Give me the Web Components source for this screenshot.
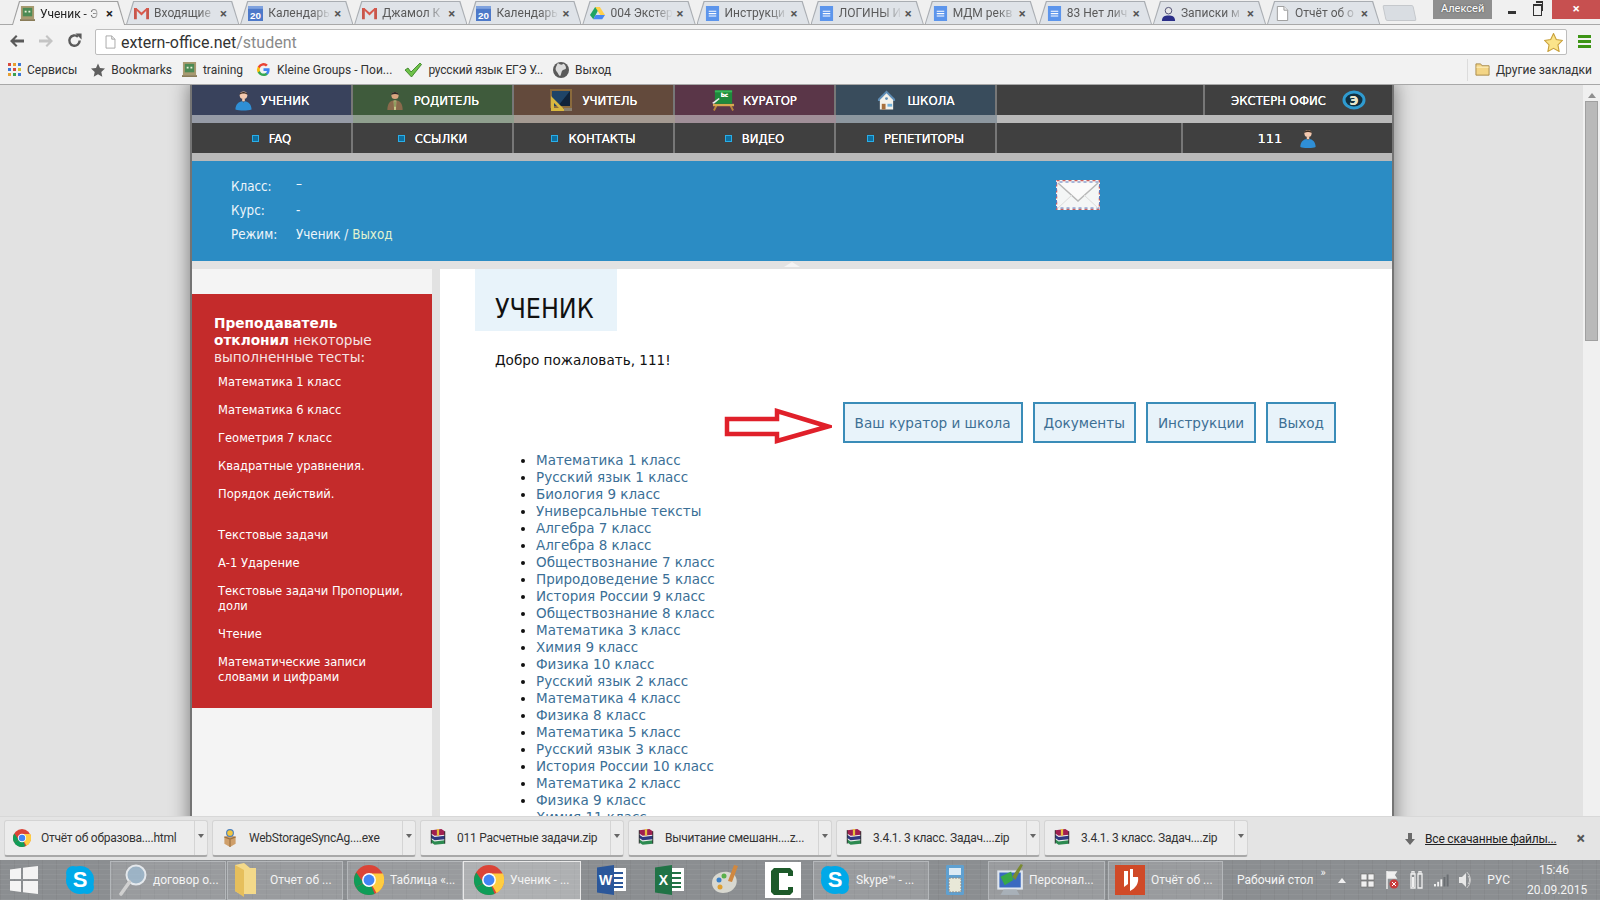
<!DOCTYPE html>
<html lang="ru">
<head>
<meta charset="utf-8">
<title>Ученик</title>
<style>
  html, body { margin: 0; height: 900px; overflow: hidden; background: #e2e2e2; }
  body { display: flex; flex-direction: column; font-family: Roboto, "Noto Sans", sans-serif; }
</style>
</head>
<body>
<browser-tabs></browser-tabs>
<browser-toolbar></browser-toolbar>
<bookmark-bar></bookmark-bar>
<page-area>
  <site-nav></site-nav>
  <student-info></student-info>
  <div slot="left"><rejected-tests></rejected-tests></div>
  <student-main></student-main>
</page-area>
<download-shelf></download-shelf>
<win-taskbar></win-taskbar>

<script>
const svg = (w, h, vb, body) => `<svg xmlns="http://www.w3.org/2000/svg" width="${w}" height="${h}" viewBox="${vb}" style="display:block;flex:none">${body}</svg>`;

// every icon is drawn on its own grid, callers only give the pixel size
const ICONS = {
  student: `<circle cx="10" cy="6" r="4" fill="#f3c9b0"/><path d="M5.8 5.5C6 1.5 14 1.5 14.2 5.5 12 3.8 8 3.8 5.8 5.5z" fill="#3a2a20"/><path d="M8.6 9.5h2.8v3H8.6z" fill="#f3c9b0"/><path d="M1.5 21c0-6 4-8.5 7-8.8l1.5 1.3 1.5-1.3c3 .3 7 2.8 7 8.8-4 1.5-13 1.5-17 0z" fill="#2f8fd6"/>`,
  parent: `<circle cx="10" cy="6" r="4" fill="#d9a57f"/><path d="M5.8 5.5C6 .8 14 .8 14.2 5.5 12 3.8 8 3.8 5.8 5.5z" fill="#2b2b2b"/><path d="M1.5 22c0-7 3-10 6.500-10.500h4c3.500.5 6.500 3.500 6.500 10.500z" fill="#8a6a4c"/><path d="M8.500 11.500h3l-.5 10.500h-2z" fill="#c8c88a"/><path d="M9.500 12.500h1v6h-1z" fill="#4d6a30"/>`,
  teacher: `<path d="M1 1h22v19H1z" fill="#8a6a3c"/><path d="M3 3h18v15H3z" fill="#10233a"/><path d="M3 3h18L9 18H3z" fill="#1f4468"/><path d="M2 8v15h15zM5 15v5h5z" fill="#d8b840" fill-rule="evenodd"/><path d="M15 20h8v3h-8z" fill="#8a8070"/>`,
  curator: `<path d="M5 17L2 23M19 17l3 6" stroke="#b8843c" stroke-width="2"/><path d="M1 16h22v2.500H1z" fill="#d8a850"/><path d="M3 2h18v14H3z" fill="#1f8a3c"/><path d="M3 2h18v2H3z" fill="#36b858"/><text x="9" y="9" font-family="DejaVu Sans" font-size="6" font-weight="bold" fill="#fff">bc</text><path d="M0 15l7-5 1 1-6 5z" fill="#eee"/>`,
  school: `<path d="M10 1L1 10v2h18v-2z" fill="#5f8db5"/><path d="M10 4L3 11v10h14V11z" fill="#f5f2ea"/><circle cx="10" cy="9.500" r="1.500" fill="#5f8db5"/><path d="M5 15h4v6H5z" fill="#a8703c"/><path d="M11 15h5v3h-5z" fill="#6fb0dc"/>`,
  envelope: `<path d="M0 0h44v30H0z" fill="#f4f6f6"/><path d="M.5.5h43v29H.5z" fill="none" stroke="#c86060" stroke-width="1.500" stroke-dasharray="3 3"/><path d="M.5 2h43v26H.5z" fill="none" stroke="#5a7ac0" stroke-width="1" stroke-dasharray="3 3" stroke-dashoffset="3"/><path d="M2 3l20 18L42 3" fill="#fafafa" stroke="#b8b8b8" stroke-width="1.500"/><path d="M2 28l14-13M42 28L28 15" stroke="#dcdcdc" fill="none"/>`,
  gmail: `<path d="M0 2h3v12H0zM13 2h3v12h-3z" fill="#c9564b"/><path d="M0 2h2.500L8 7l5.500-5H16L8 10z" fill="#d8594c"/>`,
  calendar: `<path d="M0 0h16v16H0z" fill="#4d79c9" rx="1"/><path d="M0 0h16v3H0z" fill="#7fa2de"/><text x="8" y="13.500" text-anchor="middle" font-family="Liberation Sans" font-size="10.500" font-weight="bold" fill="#fff">20</text>`,
  drive: `<path d="M5.500 1h5L6 9.500 3.500 14 0 9.500z" fill="#1fa463"/><path d="M5.500 1h5L16 9.500h-5z" fill="#ffd04b"/><path d="M3.500 14L6 9.500h10L13 14z" fill="#4687f4"/>`,
  doc: `<path d="M1 0h14v16H1z" fill="#5c95ec"/><path d="M4 5h8v1.200H4zM4 7.500h8v1.200H4zM4 10h8v1.200H4z" fill="#fff"/>`,
  userdoc: `<circle cx="8" cy="5" r="3.500" fill="#e8e8e8" stroke="#4a4a70"/><path d="M1 16c0-5 3-6 7-6s7 1 7 6z" fill="#2b2f88"/>`,
  page: `<path d="M2.500.5h7l4 4v11h-11z" fill="#fff" stroke="#999"/><path d="M9.500.5v4h4" fill="#eee" stroke="#999"/>`,
  back: `<path d="M7 2L1 8l6 6 1.500-1.500L5.500 9.500H15v-3H5.500l3-3z" fill="#5a5a5a"/>`,
  forward: `<path d="M9 2l6 6-6 6-1.500-1.500 3-3H1v-3h9.500l-3-3z" fill="#c4c4c4"/>`,
  reload: `<path d="M13.500 8A5.500 5.500 0 1 1 11.700 4" fill="none" stroke="#5a5a5a" stroke-width="2.600"/><path d="M9 .5h6.500V7z" fill="#5a5a5a"/>`,
  star: `<path d="M8.500.5l2.500 5.300 5.500.8-4 4 1 5.900-5-2.800-5 2.800 1-5.900-4-4 5.500-.8z" fill="#fbe48a" stroke="#c9a13c"/>`,
  menu: `<path d="M0 0h13v3H0zM0 5h13v3H0zM0 10h13v3H0z" fill="#3d9415"/>`,
  apps: `<path d="M0 0h3v3H0z" fill="#d8483c"/><path d="M5 0h3v3H5z" fill="#e8a030"/><path d="M10 0h3v3h-3z" fill="#3c78d8"/><path d="M0 5h3v3H0z" fill="#3c78d8"/><path d="M5 5h3v3H5z" fill="#d8483c"/><path d="M10 5h3v3h-3z" fill="#d8c030"/><path d="M0 10h3v3H0z" fill="#e8a030"/><path d="M5 10h3v3H5z" fill="#3ca050"/><path d="M10 10h3v3h-3z" fill="#3c78d8"/>`,
  bstar: `<path d="M7 .5l2 4.500 5 .6-3.700 3.300 1 4.800L7 11.300l-4.300 2.400 1-4.800L0 5.600l5-.6z" fill="#5f5f5f"/>`,
  training: `<path d="M1 0h14v14H1z" fill="#a89a70"/><path d="M3 2h10v9H3z" fill="#4c8a54"/><path d="M5 5h2v2H5zM9 5h2v2H9z" fill="#e8f0d8"/><path d="M0 14h16v2H0z" fill="#8a7c58"/>`,
  google: `<path d="M14.500 8.200c0-.5 0-1-.1-1.500H8v2.900h3.700a3.200 3.200 0 0 1-1.400 2.100v1.700h2.200c1.300-1.200 2-3 2-5.200z" fill="#4285f4"/><path d="M8 15c1.900 0 3.400-.6 4.500-1.700l-2.200-1.700c-.6.400-1.400.7-2.300.7-1.800 0-3.300-1.200-3.800-2.800H1.900v1.800A7 7 0 0 0 8 15z" fill="#34a853"/><path d="M4.200 9.500a4.200 4.200 0 0 1 0-2.800V4.900H1.900a7 7 0 0 0 0 6.400z" fill="#fbbc05"/><path d="M8 3.800c1 0 1.900.3 2.600 1l2-2A7 7 0 0 0 1.900 4.900l2.300 1.800C4.700 5 6.200 3.800 8 3.800z" fill="#ea4335"/>`,
  check: `<path d="M1 8l3-2 3 4 9-9 1.500 1.500L7.500 15z" fill="#6fc24a" stroke="#2e7a1a" stroke-width=".8"/>`,
  globe: `<circle cx="8" cy="8" r="8" fill="#5a5a5a"/><path d="M5 1c2 2 4 2 5 1s3 2 3 4-3 1-4 3-1 5-2 5-2-3-3-4-2-3-1-5 1-3 2-4z" fill="#dcdcdc"/>`,
  folder: `<path d="M1 2h5l1.500 2H15v10H1z" fill="#f3d586" stroke="#a8894a"/><path d="M1.500 5.500h13" stroke="#fff2c8"/>`,
  chrome: `<circle cx="8" cy="8" r="8" fill="#db4437"/><path d="M8 8L1 12a8 8 0 0 0 7 4c1 0 2-.2 3-.6z" fill="#0f9d58"/><path d="M8 4.500h7.400a8 8 0 0 1-3.400 10.400L8 8z" fill="#ffcd40"/><path d="M1 12A8 8 0 0 1 1.200 4L5 9.500z" fill="#0f9d58"/><circle cx="8" cy="8" r="3.700" fill="#fff"/><circle cx="8" cy="8" r="2.900" fill="#4285f4"/>`,
  setup: `<path d="M3 7l5-2 5 2v6l-5 3-5-3z" fill="#cf9f6a"/><path d="M3 7l5 2 5-2M8 9v7" fill="none" stroke="#9a7040"/><circle cx="8" cy="3.500" r="3" fill="#f3c640" stroke="#4a80c0"/>`,
  rar: `<path d="M2 1l9-1 3 2v3l-9 1-3-2z" fill="#a02050"/><path d="M2 5l3 2 9-1v3l-9 1-3-2z" fill="#303880"/><path d="M2 9l3 2 9-1v3l-9 1-3-2z" fill="#2c8a50"/><path d="M7 0h2v6H7z" fill="#e8c040"/><path d="M2 1v12M14 2v11" stroke="#111" stroke-width=".7"/>`,
  arrowdown: `<path d="M3 0h4v6h3l-5 6-5-6h3z" fill="#6a6a6a"/>`,
  win: `<path d="M0 3.500L11 2v11H0zM13 1.700L28 0v13H13zM0 15h11v11L0 24.500zM13 15h15v13l-15-1.700z" fill="#f4f4f4"/>`,
  skype: `<circle cx="15" cy="15" r="14" fill="#00a9e8"/><circle cx="8" cy="8" r="7" fill="#00a9e8"/><circle cx="22" cy="22" r="7" fill="#00a9e8"/><text x="15" y="22" text-anchor="middle" font-family="Liberation Sans" font-size="22" font-weight="bold" fill="#fff">S</text>`,
  search: `<circle cx="19" cy="11" r="9.500" fill="#9fc3e0" fill-opacity=".6" stroke="#e4e8ec" stroke-width="2"/><path d="M12.500 18L4 30" stroke="#d0d0d0" stroke-width="3.500" stroke-linecap="round"/>`,
  winfolder: `<path d="M1 2l9-2 6 5h6v26H6L1 28z" fill="#f3d98a"/><path d="M1 2l9 5v27l-9-6z" fill="#e6bf5c"/>`,
  word: `<path d="M10 3h19v23H10z" fill="#fff"/><path d="M14 7h12v2H14zM14 12h12v2H14zM14 17h12v2H14zM14 21h12v2H14z" fill="#2b579a"/><path d="M0 2.500L17 0v30L0 27.500z" fill="#2b579a"/><text x="8.500" y="20" text-anchor="middle" font-family="Liberation Sans" font-size="14" font-weight="bold" fill="#fff">W</text>`,
  excel: `<path d="M10 3h19v23H10z" fill="#fff"/><path d="M14 7h12v2H14zM14 12h12v2H14zM14 17h12v2H14zM14 21h12v2H14z" fill="#217346"/><path d="M0 2.500L17 0v30L0 27.500z" fill="#217346"/><text x="8.500" y="20" text-anchor="middle" font-family="Liberation Sans" font-size="14" font-weight="bold" fill="#fff">X</text>`,
  paint: `<path d="M2 18C2 10 10 6 18 7c8 1 10 8 8 13s-7 8-13 8-11-4-11-10z" fill="#d8d8d0"/><circle cx="9" cy="15" r="2.500" fill="#3a80c8"/><circle cx="14" cy="11" r="2.500" fill="#5ab04a"/><circle cx="10" cy="22" r="2.500" fill="#e0a030"/><path d="M24 0l4 1-6 16-4-1z" fill="#d08840"/>`,
  cc: `<path d="M0 0h36v36H0z" fill="#fff"/><path d="M9 6h16l3 3v5h-5v-3h-9v17h9v-3h5v5l-3 3H9l-3-3V9z" fill="#1d5a2a"/>`,
  calc: `<path d="M0 1a2 2 0 0 1 2-1h14a2 2 0 0 1 2 1v28a2 2 0 0 1-2 1H2a2 2 0 0 1-2-1z" fill="#5fa0d0"/><path d="M3 3h12v7H3z" fill="#dceaf4"/><path d="M3 13h12v14H3z" fill="#e8e8d8" stroke="#8a8a8a" stroke-dasharray="2 1"/>`,
  personal: `<path d="M2 6h24v18H2z" fill="#dfe6ee"/><path d="M4 8h20v14H4z" fill="#3a6ac0"/><path d="M5 12l10-5 2 8-8 5z" fill="#38a848"/><path d="M16 12L24 0l2 1-7 14z" fill="#7a8a30"/><path d="M8 24h12l3 5H5z" fill="#a8b0b8"/>`,
  pdf: `<path d="M0 0h30v30H0z" fill="#d04a28"/><path d="M9 6h4v13l-4 3zM15 4h3v8h5c1 6-2 11-8 14z" fill="#fff"/>`,
  trayflag: `<path d="M1 1h7v7H1zM9 1h7v7H9zM1 9h7v7H1zM9 9h7v7H9z" fill="#f0f0f0" stroke="#777"/>`,
  trayaction: `<path d="M2 0v18M2 1h9l-2 3 2 3H2" fill="#f0f0f0" stroke="#eee" stroke-width="1.500"/><circle cx="9" cy="13" r="4.500" fill="#c83c3c"/><path d="M7 11l4 4m0-4l-4 4" stroke="#fff"/>`,
  battery: `<path d="M2 3h4v14H2zM9 3h4v14H9zM3 0h2v3H3zM10 0h2v3h-2z" fill="none" stroke="#f0f0f0" stroke-width="1.300"/><path d="M3 6h2v10H3z" fill="#f0f0f0"/>`,
  signal: `<path d="M0 12h2.500v3H0zM4 9h2.500v6H4zM8 6h2.500v9H8zM12 3h2.500v12H12zM16 0h2.500v15H16z" fill="#6a6e72"/><path d="M0 12h2.500v3H0zM4 9h2.500v6H4zM8 6h2.500v9H8z" fill="#f0f0f0"/>`,
  sound: `<path d="M0 5h3l4-4v14l-4-4H0z" fill="#e8e8e8"/><path d="M9 4c2 2 2 6 0 8M7.500 0c5 3 5 13 0 16" fill="none" stroke="#d8d8d8"/>`
};
const VIEW = {
  student: '0 0 20 22', parent: '0 0 20 22', teacher: '0 0 24 24', curator: '0 0 24 24', school: '0 0 20 22',
  envelope: '0 0 44 30', back: '0 0 16 16', win: '0 0 28 28', skype: '0 0 30 30', search: '0 0 30 32', winfolder: '0 0 22 34',
  word: '0 0 30 30', excel: '0 0 30 30', paint: '0 0 30 30', cc: '0 0 36 36', calc: '0 0 18 30', personal: '0 0 26 30',
  pdf: '0 0 30 30', trayflag: '0 0 17 17', trayaction: '0 0 14 18', battery: '0 0 15 18', signal: '0 0 19 15', sound: '0 0 12 16',
  star: '0 0 17 17', menu: '0 0 13 13', apps: '0 0 13 13', bstar: '0 0 14 14', arrowdown: '0 0 10 12', check: '0 0 18 16'
};
const icon = (name, w, h = w) => svg(w, h, VIEW[name] || '0 0 16 16', ICONS[name]);

class BrowserTabs extends HTMLElement {
  connectedCallback() {
    const tabs = [
      ['training', 'Ученик - Э'], ['gmail', 'Входящие'], ['calendar', 'Календарь'], ['gmail', 'Джамол К'],
      ['calendar', 'Календарь'], ['drive', '004 Экстер'], ['doc', 'Инструкци'], ['doc', 'ЛОГИНЫ И'],
      ['doc', 'МДМ рекв'], ['doc', '83 Нет лич'], ['userdoc', 'Записки м'], ['page', 'Отчёт об о']
    ];
    this.attachShadow({ mode: 'open' }).innerHTML = `
      <style>
        :host { display: flex; height: 25px; box-sizing: border-box; padding-left: 12px; background: #f0f0f0; border-bottom: 1px solid #a9a9a9; flex: none; }
        .tab { position: relative; width: 114.1px; height: 24px; flex: none; display: flex; align-items: center; padding: 2px 0 0 8px; box-sizing: border-box; font-size: 12px; color: #5a5a5a; z-index: 1; }
        .tab::before, .tab::after { content: ""; position: absolute; z-index: -1; clip-path: polygon(0 100%, 7px 0, calc(100% - 7px) 0, 100% 100%); }
        .tab::before { inset: 1px 1px 0 0; background: #a9adb2; }
        .tab::after { inset: 2px 2px 0 1px; background: #dfe3e8; }
        .tab.on { color: #222; z-index: 2; height: 25px; }
        .tab.on::before { background: #a0a0a0; }
        .tab.on::after { background: #f3f3f3; }
        .title { margin-left: 5px; width: 63px; white-space: nowrap; overflow: hidden; -webkit-mask-image: linear-gradient(90deg, #000 70%, transparent); mask-image: linear-gradient(90deg, #000 70%, transparent); }
        .x { margin-left: 3px; font-size: 13px; font-weight: bold; color: #555; }
        .on .x { color: #222; }
        .new { width: 31px; height: 16px; margin: 5px 0 0 3px; flex: none; background: #d9dde2; border: 1px solid #c5c8cc; box-sizing: border-box; transform: skewX(12deg); border-radius: 2px; }
        .user { margin-left: 18px; width: 59px; height: 19px; background: #8f8f8f; color: #fff; font-size: 11px; text-align: center; line-height: 17px; flex: none; text-shadow: 0 0 2px #444; }
        .ctl { flex: none; position: relative; }
        .min { margin-left: 14px; width: 26px; }
        .min i { position: absolute; left: 2px; top: 11px; width: 8px; height: 3px; background: #333; }
        .max { width: 20px; }
        .max i { position: absolute; left: 1px; top: 4px; width: 7px; height: 9px; border: 1px solid #333; border-top-width: 2px; }
        .max b { position: absolute; left: 4px; top: 1px; width: 6px; height: 8px; border: 1px solid #333; border-top-width: 2px; border-left: 0; border-bottom: 0; }
        .close { width: 48px; height: 19px; background: #c75050; color: #fff; text-align: center; font-size: 13px; font-weight: bold; line-height: 17px; flex: none; margin-left: auto; }
      </style>
      ${tabs.map(([ic, t], i) => `<div class="tab ${i === 0 ? 'on' : ''}">${icon(ic, 15)}<span class="title">${t}</span><span class="x">×</span></div>`).join('')}
      <div class="new"></div>
      <div class="user">Алексей</div>
      <div class="ctl min"><i></i></div>
      <div class="ctl max"><i></i><b></b></div>
      <div class="close">×</div>`;
  }
}

class BrowserToolbar extends HTMLElement {
  connectedCallback() {
    this.attachShadow({ mode: 'open' }).innerHTML = `
      <style>
        :host { display: flex; align-items: center; height: 31px; box-sizing: border-box; padding-left: 9px; background: #f2f2f2; flex: none; }
        .btn { width: 29px; display: flex; justify-content: flex-start; flex: none; }
        .omni { width: 1472px; height: 26px; margin-top: 3px; box-sizing: border-box; border: 1px solid #bdbdbd; border-radius: 2px; background: #fff; display: flex; align-items: center; padding: 0 3px 0 8px; flex: none; font-size: 16px; color: #333; }
        .url { margin-left: 4px; flex: 1; }
        .url span { color: #8a8a8a; }
        .menu { margin-left: 11px; margin-top: 2px; }
      </style>
      <div class="btn">${icon('back', 16)}</div>
      <div class="btn">${icon('forward', 16)}</div>
      <div class="btn" style="width:28px">${icon('reload', 15)}</div>
      <div class="omni">${icon('page', 13, 16)}<div class="url">extern-office.net<span>/student</span></div>${icon('star', 19)}</div>
      <div class="menu">${icon('menu', 13)}</div>`;
  }
}

class BookmarkBar extends HTMLElement {
  connectedCallback() {
    const marks = [
      ['apps', 'Сервисы', 13, 7], ['bstar', 'Bookmarks', 14, 14], ['training', 'training', 15, 10], ['google', 'Kleine Groups - Пои...', 15, 13],
      ['check', 'русский язык ЕГЭ У...', 18, 12, '-.2px'], ['globe', 'Выход', 16, 10]
    ];
    this.attachShadow({ mode: 'open' }).innerHTML = `
      <style>
        :host { display: flex; align-items: center; height: 29px; box-sizing: border-box; padding: 0 8px 1px 8px; background: #f2f2f2; border-bottom: 1px solid #a8a8a8; font-size: 12px; color: #333; flex: none; white-space: nowrap; }
        .m { display: flex; align-items: center; gap: 6px; }
        .other { margin-left: auto; display: flex; align-items: center; gap: 6px; border-left: 1px solid #dcdcdc; padding-left: 7px; height: 22px; }
      </style>
      ${marks.map(([ic, t, w, ml, ls], i) => `<div class="m" style="margin-left:${i ? ml : 0}px">${icon(ic, w, ic === 'check' ? 16 : w)}<span style="letter-spacing:${ls || 0}">${t}</span></div>`).join('')}
      <div class="other">${icon('folder', 15)}<span>Другие закладки</span></div>`;
  }
}

class PageArea extends HTMLElement {
  connectedCallback() {
    this.attachShadow({ mode: 'open' }).innerHTML = `
      <style>
        :host { display: grid; grid-template-columns: 192px 1200px 1fr 17px; height: 731px; background: #e2e2e2; overflow: hidden; flex: none; }
        .site { grid-column: 2; box-shadow: 0 0 0 2px #747474, 0 0 18px 3px rgba(0,0,0,.45); background: #e2e2e2; display: flex; flex-direction: column; }
        .body { display: flex; gap: 8px; }
        .side { width: 240px; flex: none; height: 700px; background: #f4f4f4; padding-top: 25px; box-sizing: border-box; }
        .main { flex: 1; background: #fff; }
        .bar { grid-column: 4; background: #f0f0f0; display: flex; flex-direction: column; align-items: center; }
        .up { width: 0; height: 0; margin-top: 8px; border: 4px solid transparent; border-top: 0; border-bottom: 5px solid #8f8f8f; }
        .thumb { margin-top: 3px; width: 13px; height: 240px; background: #b9b9b9; border: 1px solid #a0a0a0; box-sizing: border-box; }
        .down { margin-top: auto; margin-bottom: 8px; width: 0; height: 0; border: 4px solid transparent; border-bottom: 0; border-top: 5px solid #666; }
      </style>
      <div class="site">
        <slot></slot>
        <div class="body">
          <div class="side"><slot name="left"></slot></div>
          <div class="main"><slot name="main"></slot></div>
        </div>
      </div>
      <div class="bar"><div class="up"></div><div class="thumb"></div><div class="down"></div></div>`;
    this.querySelector('student-main').slot = 'main';
  }
}

class SiteNav extends HTMLElement {
  connectedCallback() {
    const top = [
      ['student', 'УЧЕНИК', 161, '#39425c', '#969ba6', 19, 22, 8],
      ['parent', 'РОДИТЕЛЬ', 161, '#3f5b3c', '#8f9f8e', 18, 22, 10],
      ['teacher', 'УЧИТЕЛЬ', 161, '#634a3c', '#a49a92', 24, 24, 9],
      ['curator', 'КУРАТОР', 161, '#5a3648', '#a08f98', 23, 24, 8],
      ['school', 'ШКОЛА', 161, '#394c5c', '#8d979f', 19, 22, 12]
    ];
    const sub = [['FAQ', 161], ['ССЫЛКИ', 161], ['КОНТАКТЫ', 161], ['ВИДЕО', 161], ['РЕПЕТИТОРЫ', 161]];
    this.attachShadow({ mode: 'open' }).innerHTML = `
      <style>
        :host { display: block; font-family: "DejaVu Sans Condensed", "DejaVu Sans", sans-serif; font-size: 13px; color: #fff; text-shadow: 0 0 .6px #fff; }
        .row { display: flex; height: 30px; background: #404040; }
        .strip { display: flex; height: 8px; background: #b9b9b9; }
        .strip i { display: block; height: 8px; }
        .cell { box-sizing: border-box; display: flex; align-items: center; justify-content: center; border-right: 2px solid #777; flex: none; }
        .cell:last-child { border-right: 0; flex: 1; }
        .sq { width: 5px; height: 5px; border: 1px solid #29aee8; background: #0f6f9f; margin-right: 10px; }
        .logo { margin-left: 16px; }
      </style>
      <div class="row">
        ${top.map(([ic, t, w, bg, , iw, ih, g]) => `<div class="cell" style="width:${w}px;background:${bg};gap:${g}px">${icon(ic, iw, ih)}<span>${t}</span></div>`).join('')}
        <div class="cell" style="width:208px"></div>
        <div class="cell"><span>ЭКСТЕРН ОФИС</span><span class="logo">${svg(24, 20, '0 0 24 20', `<ellipse cx="12" cy="10" rx="10" ry="8" fill="#12303f" stroke="#2f9bd0" stroke-width="3"/><text x="12" y="14.500" text-anchor="middle" font-family="DejaVu Sans" font-size="12" font-weight="bold" fill="#e8e4c8">Э</text>`)}</span></div>
      </div>
      <div class="strip">${top.map(([, , w, , s]) => `<i style="width:${w}px;background:${s}"></i>`).join('')}</div>
      <div class="row">
        ${sub.map(([t, w]) => `<div class="cell" style="width:${w}px"><span class="sq"></span><span>${t}</span></div>`).join('')}
        <div class="cell" style="width:186px"></div>
        <div class="cell" style="gap:17px"><span style="font-family:'DejaVu Sans'">111</span>${icon('student', 18, 20)}</div>
      </div>
      <div class="strip"></div>`;
  }
}

class StudentInfo extends HTMLElement {
  connectedCallback() {
    this.attachShadow({ mode: 'open' }).innerHTML = `
      <style>
        :host { display: block; font-family: "DejaVu Sans Condensed", "DejaVu Sans", sans-serif; font-size: 13.300px; color: #eef5fa; }
        .panel { height: 100px; box-sizing: border-box; background: #2b8cc4; padding: 13px 0 0 39px; display: flex; }
        .grid { display: grid; grid-template-columns: 65px 200px; grid-auto-rows: 24px; align-items: center; width: 265px; }
        .grid a { color: #e2f3cf; }
        .dash { margin-bottom: 6px; }
        .mail { margin: 6px 0 0 560px; }
        .foot { height: 8px; display: flex; justify-content: center; }
        .foot i { width: 0; height: 0; margin-top: 1px; border: 8px solid transparent; border-top: 0; border-bottom: 5px solid #f4f4f4; }
      </style>
      <div class="panel">
        <div class="grid">
          <span>Класс:</span><span class="dash">–</span>
          <span>Курс:</span><span>-</span>
          <span>Режим:</span><span>Ученик / <a>Выход</a></span>
        </div>
        <div class="mail">${icon('envelope', 44, 30)}</div>
      </div>
      <div class="foot"><i></i></div>`;
  }
}

class RejectedTests extends HTMLElement {
  connectedCallback() {
    const first = ['Математика 1 класс', 'Математика 6 класс', 'Геометрия 7 класс', 'Квадратные уравнения.', 'Порядок действий.'];
    const second = ['Текстовые задачи', 'А-1 Ударение', 'Текстовые задачи Пропорции, доли', 'Чтение', 'Математические записи словами и цифрами'];
    this.attachShadow({ mode: 'open' }).innerHTML = `
      <style>
        :host { display: block; box-sizing: border-box; height: 414px; background: #c42b2b; color: #fff; padding: 21px 22px 0 22px; font-family: "DejaVu Sans", sans-serif; }
        .head { font-size: 13.700px; line-height: 17px; margin-bottom: 8px; color: #f6e3e3; width: 170px; }
        .head b { color: #fff; }
        ul { list-style: none; margin: 0; padding: 0 0 0 4px; font-family: "DejaVu Sans Condensed", "DejaVu Sans", sans-serif; font-size: 12.800px; line-height: 15px; }
        li { margin-bottom: 13px; }
        ul + ul { margin-top: 26px; }
      </style>
      <div class="head"><b>Преподаватель отклонил</b> некоторые выполненные тесты:</div>
      <ul>${first.map(t => `<li>${t}</li>`).join('')}</ul>
      <ul>${second.map(t => `<li>${t}</li>`).join('')}</ul>`;
  }
}

class LinkButton extends HTMLElement {
  connectedCallback() {
    this.attachShadow({ mode: 'open' }).innerHTML = `
      <style>
        :host { display: flex; align-items: center; box-sizing: border-box; height: 41px; padding: 0 10px; border: 2px solid #3a8cb8; background: #e8f3fa; color: #3d6f94; font-size: 13.600px; font-family: "DejaVu Sans", sans-serif; white-space: nowrap; }
        :host([tight]) { padding: 0 9px; }
      </style>
      <slot></slot>`;
  }
}
customElements.define('link-button', LinkButton);

class StudentMain extends HTMLElement {
  connectedCallback() {
    const subjects = ['Математика 1 класс', 'Русский язык 1 класс', 'Биология 9 класс', 'Универсальные тексты', 'Алгебра 7 класс', 'Алгебра 8 класс',
      'Обществознание 7 класс', 'Природоведение 5 класс', 'История России 9 класс', 'Обществознание 8 класс', 'Математика 3 класс', 'Химия 9 класс',
      'Физика 10 класс', 'Русский язык 2 класс', 'Математика 4 класс', 'Физика 8 класс', 'Математика 5 класс', 'Русский язык 3 класс',
      'История России 10 класс', 'Математика 2 класс', 'Физика 9 класс', 'Химия 11 класс'];
    this.attachShadow({ mode: 'open' }).innerHTML = `
      <style>
        :host { display: block; font-family: "DejaVu Sans", sans-serif; font-size: 13.600px; color: #111; height: 700px; }
        h1 { margin: 0 0 0 35px; width: 142px; height: 62px; box-sizing: border-box; padding: 24px 0 0 20px; background: #e8f3fa; font-family: "DejaVu Sans Condensed", "DejaVu Sans", sans-serif; font-weight: normal; font-size: 26.500px; line-height: 32px; color: #111; }
        p { margin: 19px 0 0 55px; line-height: 20px; }
        .actions { display: flex; justify-content: flex-end; align-items: flex-start; gap: 10px; margin: 32px 56px 0 0; }
        .arrow { margin-right: 1px; margin-top: 6px; }
        ul { margin: 8px 0 0; padding: 0 0 0 96px; line-height: 17px; font-size: 13.500px; }
        li { color: #111; }
        li span { color: #3b6f96; }
      </style>
      <h1>УЧЕНИК</h1>
      <p>Добро пожаловать, 111!</p>
      <div class="actions">
        <span class="arrow">${svg(108, 36, '0 0 108 36', `<path d="M3 11h50V3l51 15.500L53 33v-7H3z" fill="#fff" stroke="#e0202a" stroke-width="4.500"/>`)}</span>
        <link-button>Ваш куратор и школа</link-button>
        <link-button tight>Документы</link-button>
        <link-button>Инструкции</link-button>
        <link-button>Выход</link-button>
      </div>
      <ul>${subjects.map(t => `<li><span>${t}</span></li>`).join('')}</ul>`;
  }
}

class DownloadShelf extends HTMLElement {
  connectedCallback() {
    const files = [['chrome', 'Отчёт об образова....html'], ['setup', 'WebStorageSyncAg....exe'], ['rar', '011 Расчетные задачи.zip'],
      ['rar', 'Вычитание смешанн....z...'], ['rar', '3.4.1. 3 класс. Задач....zip'], ['rar', '3.4.1. 3 класс. Задач....zip']];
    this.attachShadow({ mode: 'open' }).innerHTML = `
      <style>
        :host { display: flex; align-items: center; height: 44px; box-sizing: border-box; padding: 0 15px 0 4px; gap: 4px; background: #e4e4e4; border-top: 1px solid #d8d8d8; font-size: 12px; color: #333; flex: none; white-space: nowrap; }
        .file { width: 204px; height: 37px; box-sizing: border-box; display: flex; align-items: center; background: #ececec; border: 1px solid #d4d4d4; border-bottom: 2px solid #a8a8a8; border-radius: 3px; padding-left: 8px; flex: none; }
        .name { margin-left: 10px; letter-spacing: -.25px; }
        .drop { height: 100%; border-left: 1px solid #d4d4d4; margin-left: auto; width: 13px; display: flex; justify-content: center; padding-top: 13px; box-sizing: border-box; }
        .drop i { width: 0; height: 0; border: 3px solid transparent; border-bottom: 0; border-top: 4px solid #666; }
        .all { margin-left: auto; display: flex; align-items: center; gap: 10px; }
        .all u { color: #222; letter-spacing: -.2px; }
        .x { margin-left: 10px; font-size: 16px; font-weight: bold; color: #555; }
      </style>
      ${files.map(([ic, t]) => `<div class="file">${icon(ic, 18)}<span class="name">${t}</span><span class="drop"><i></i></span></div>`).join('')}
      <div class="all">${icon('arrowdown', 10, 12)}<u>Все скачанные файлы...</u><span class="x">×</span></div>`;
  }
}

class WinTaskbar extends HTMLElement {
  connectedCallback() {
    // icon, label, icon w/h, box width, left margin, kind (1 running, 2 active), gap to label
    const items = [
      ['win', '', 28, 28, 28, 10, 0], ['skype', '', 30, 32, 30, 27, 0], ['search', 'договор о...', 30, 32, 116, 15, 1], ['winfolder', 'Отчет об ...', 22, 34, 116, 1, 1, 14],
      ['chrome', 'Таблица «...', 30, 30, 116, 4, 1], ['chrome', 'Ученик - ...', 30, 30, 118, 0, 2], ['word', '', 30, 30, 30, 16, 0], ['excel', '', 30, 30, 30, 28, 0],
      ['paint', '', 30, 30, 30, 25, 0], ['cc', '', 36, 36, 36, 25, 0], ['skype', 'Skype™ - ...', 30, 30, 116, 12, 1], ['calc', '', 22, 30, 30, 11, 0],
      ['personal', 'Персонал...', 28, 32, 117, 18, 1], ['pdf', 'Отчёт об ...', 30, 30, 115, 3, 1]
    ];
    const tray = [['trayflag', 15, 15], ['trayaction', 14, 18], ['battery', 15, 18], ['signal', 15, 13], ['sound', 12, 16]];
    this.attachShadow({ mode: 'open' }).innerHTML = `
      <style>
        :host { display: flex; align-items: center; height: 40px; background-color: #8b8e91; background-image: repeating-linear-gradient(0deg, rgba(255,255,255,.05) 0 1px, transparent 1px 5px), repeating-linear-gradient(90deg, rgba(0,0,0,.04) 0 1px, transparent 1px 14px); color: #f4f4f4; font-size: 12px; flex: none; white-space: nowrap; }
        .item { height: 39px; box-sizing: border-box; display: flex; align-items: center; gap: 6px; justify-content: center; flex: none; }
        .b1 { border: 1px solid #b4b7ba; background: rgba(255,255,255,.12); padding-left: 6px; justify-content: flex-start; }
        .b2 { border: 1px solid #e8e8e8; background: rgba(255,255,255,.3); padding-left: 10px; justify-content: flex-start; }
        .desk { margin-left: 14px; }
        .more { margin-left: 7px; margin-bottom: 16px; font-size: 11px; }
        .right { margin-left: auto; display: flex; align-items: center; padding-right: 19px; }
        .tray { margin-left: 14px; display: flex; align-items: center; gap: 10px; }
        .tri { width: 0; height: 0; border: 4px solid transparent; border-top: 0; border-bottom: 5px solid #f0f0f0; }
        .lang { margin-left: 16px; }
        .clock { margin-left: 17px; width: 54px; text-align: center; font-size: 12px; line-height: 20px; }
      </style>
      ${items.map(([ic, t, w, h, bw, ml, kind, g]) => `<div class="item ${kind ? 'b' + kind : ''}" style="width:${bw}px;margin-left:${ml}px${g ? ';gap:' + g + 'px' : ''}">${icon(ic, w, h)}${t ? `<span>${t}</span>` : ''}</div>`).join('')}
      <span class="desk">Рабочий стол</span><span class="more">»</span>
      <div class="right">
        <span class="tri"></span>
        <div class="tray">${tray.map(([ic, w, h]) => icon(ic, w, h)).join('')}</div>
        <span class="lang">РУС</span>
        <div class="clock">15:46<br>20.09.2015</div>
      </div>`;
  }
}

customElements.define('browser-tabs', BrowserTabs);
customElements.define('browser-toolbar', BrowserToolbar);
customElements.define('bookmark-bar', BookmarkBar);
customElements.define('page-area', PageArea);
customElements.define('site-nav', SiteNav);
customElements.define('student-info', StudentInfo);
customElements.define('rejected-tests', RejectedTests);
customElements.define('student-main', StudentMain);
customElements.define('download-shelf', DownloadShelf);
customElements.define('win-taskbar', WinTaskbar);
</script>
</body>
</html>
